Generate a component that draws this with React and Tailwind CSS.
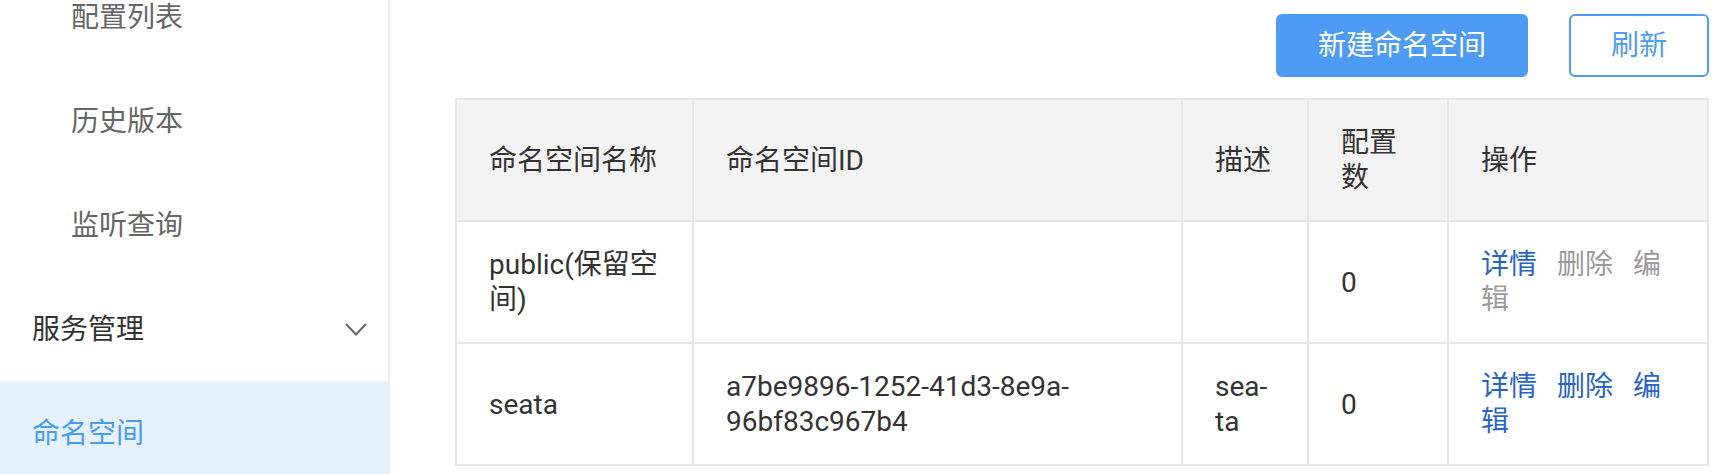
import React from 'react';

const font = { fontFamily: 'Roboto, "Noto Sans CJK SC", sans-serif' };

const subItems = ['配置列表', '历史版本', '监听查询'];

const rows = [
  { name: 'public(保留空间)', id: '', desc: '', count: 0, locked: true },
  { name: 'seata', id: 'a7be9896-1252-41d3-8e9a-96bf83c967b4', desc: 'sea\u00ADta', count: 0, locked: false },
];

function Chevron() {
  return (
    <svg width="22" height="13" viewBox="0 0 22 13" fill="none">
      <polyline points="1,1 11,11.5 21,1" stroke="#666" strokeWidth="2" />
    </svg>
  );
}

function Sidebar() {
  return (
    <aside className="w-[390px] shrink-0 h-[474px] overflow-hidden bg-white border-r-2 border-[#eeeeee]">
      <div className="-mt-[35px]">
        {subItems.map((t) => (
          <div key={t} className="h-[104px] flex items-center pl-[71px] text-[28px] text-[#666]">
            {t}
          </div>
        ))}
        <div className="h-[104px] flex items-center justify-between pl-[32px] pr-[21px] text-[28px] text-[#333]">
          <span>服务管理</span>
          <Chevron />
        </div>
        <div className="h-[104px] flex items-center pl-[32px] text-[28px] text-[#4a9cf1] bg-[#e5f1fd]">
          命名空间
        </div>
      </div>
    </aside>
  );
}

export default function App() {
  const th = 'border-2 border-[#e6e6e6] px-8 text-left font-normal text-[#333] align-middle';
  const td = 'border-2 border-[#e6e6e6] px-8 text-[#333] align-middle';

  return (
    <div style={font} className="flex w-[1720px] h-[474px] overflow-hidden bg-white leading-[35px]">
      <Sidebar />

      <main className="flex-1 pl-[65px] pr-[13px] pt-[14px]">
        {/* toolbar */}
        <div className="flex justify-end gap-[41px]">
          <button className="h-[63px] px-[42px] rounded-[6px] bg-[#4e9bf4] text-white text-[28px]">
            新建命名空间
          </button>
          <button className="h-[63px] w-[140px] rounded-[6px] border-2 border-[#4e9bf4] bg-white text-[#4e9bf4] text-[28px]">
            刷新
          </button>
        </div>

        {/* namespace table */}
        <table className="mt-[21px] w-[1252px] table-fixed border-collapse text-[28px]">
          <colgroup>
            <col className="w-[237px]" />
            <col className="w-[489px]" />
            <col className="w-[126px]" />
            <col className="w-[140px]" />
            <col className="w-[260px]" />
          </colgroup>
          <thead>
            <tr className="h-[122px] bg-[#f3f3f3]">
              <th className={th}>命名空间名称</th>
              <th className={th}>命名空间ID</th>
              <th className={th}>描述</th>
              <th className={th}>配置数</th>
              <th className={th}>操作</th>
            </tr>
          </thead>
          <tbody>
            {rows.map((r) => (
              <tr key={r.name} className="h-[122px]">
                <td className={td}>{r.name}</td>
                <td className={td}>{r.id}</td>
                <td className={td}>{r.desc}</td>
                <td className={td}>{r.count}</td>
                <td className={td}>
                  <span className="text-[#2964c4] mr-[20px]">详情</span>
                  <span className={(r.locked ? 'text-[#9a9a9a]' : 'text-[#2964c4]') + ' mr-[20px]'}>删除</span>
                  <span className={r.locked ? 'text-[#9a9a9a]' : 'text-[#2964c4]'}>编辑</span>
                </td>
              </tr>
            ))}
          </tbody>
        </table>
      </main>
    </div>
  );
}
